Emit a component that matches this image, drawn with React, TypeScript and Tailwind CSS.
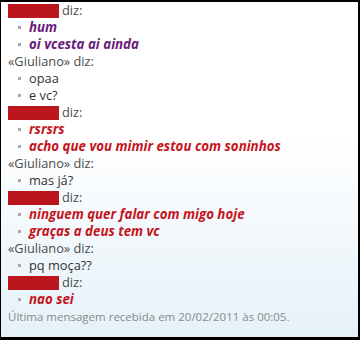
import React from "react";

type Line =
  | { kind: "name"; name?: string }
  | { kind: "msg"; text: string; color: "purple" | "red" | "plain" };

const lines: Line[] = [
  { kind: "name" },
  { kind: "msg", text: "hum", color: "purple" },
  { kind: "msg", text: "oi vcesta ai ainda", color: "purple" },
  { kind: "name", name: "«Giuliano»" },
  { kind: "msg", text: "opaa", color: "plain" },
  { kind: "msg", text: "e vc?", color: "plain" },
  { kind: "name" },
  { kind: "msg", text: "rsrsrs", color: "red" },
  { kind: "msg", text: "acho que vou mimir estou com soninhos", color: "red" },
  { kind: "name", name: "«Giuliano»" },
  { kind: "msg", text: "mas já?", color: "plain" },
  { kind: "name" },
  { kind: "msg", text: "ninguem quer falar com migo hoje", color: "red" },
  { kind: "msg", text: "graças a deus tem vc", color: "red" },
  { kind: "name", name: "«Giuliano»" },
  { kind: "msg", text: "pq moça??", color: "plain" },
  { kind: "name" },
  { kind: "msg", text: "nao sei", color: "red" },
];

const font = { fontFamily: '"Open Sans", "Noto Sans", sans-serif' };

function Row({ line }: { line: Line }) {
  if (line.kind === "name") {
    return (
      <div className="flex h-[17px] items-center text-[12.8px] text-[#4a4a4a]">
        {line.name ? (
          <span>{line.name} diz:</span>
        ) : (
          <>
            <span className="mr-[3px] inline-block h-[14px] w-[51px] bg-[#bb161e]" />
            <span>diz:</span>
          </>
        )}
      </div>
    );
  }
  const cls =
    line.color === "purple"
      ? "font-bold italic text-[#6a1b78] text-[13.3px]"
      : line.color === "red"
      ? "font-bold italic text-[#c5131c] text-[13.3px]"
      : "text-[#333] text-[12.8px]";
  return (
    <div className="flex h-[17px] items-center">
      <span className="ml-[10px] mr-[8px] inline-block h-[3px] w-[3px] bg-[#a9a9a9]" />
      <span className={cls}>{line.text}</span>
    </div>
  );
}

export default function App() {
  return (
    <div className="h-[340px] w-[360px] bg-black pl-[1px] pt-[2px]" style={font}>
      <div className="flex h-[335px] w-[357px] flex-col overflow-hidden bg-gradient-to-b from-white from-40% to-[#e5f1f9]">
        <div className="flex flex-col pl-[7px] leading-none">
          {lines.map((l, i) => (
            <Row key={i} line={l} />
          ))}
          <div className="flex h-[17px] items-center text-[11.5px] text-[#8a8a8a]">
            Última mensagem recebida em 20/02/2011 às 00:05.
          </div>
        </div>
        <div className="mt-[10px] h-[1px] w-full bg-[#cfdbe3]" />
        <div className="ml-[7px] mt-[2px] h-[10px] rounded-tl-[4px] border-l border-t border-[#c3ccd4] bg-white" />
      </div>
    </div>
  );
}
